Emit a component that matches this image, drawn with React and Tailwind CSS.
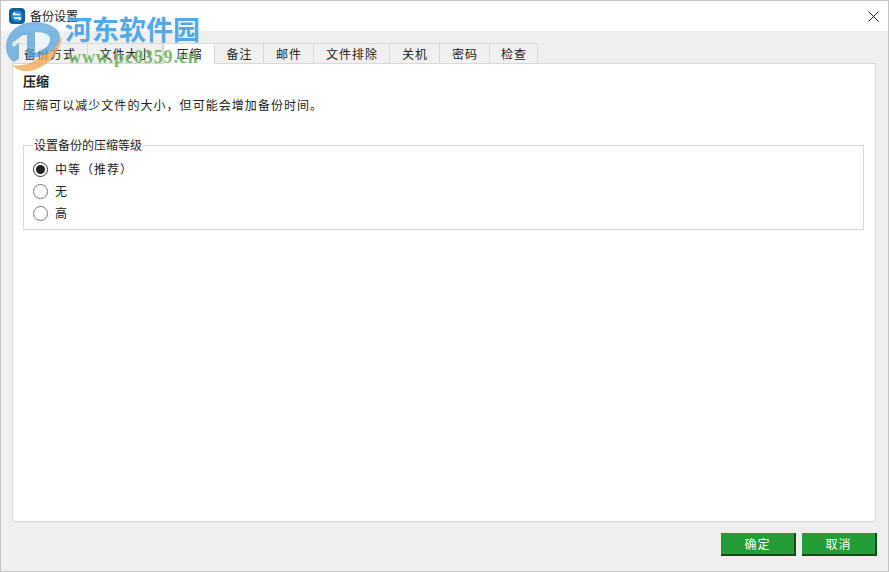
import React from "react";

const font = { fontFamily: '"Noto Sans CJK SC","Liberation Sans",sans-serif' };

function Radio({ checked, label }) {
  return (
    <div className="flex items-center h-[22px]">
      <span className={`w-[15px] h-[15px] rounded-full border flex items-center justify-center bg-white ${checked ? "border-[#333333]" : "border-[#777777]"}`}>
        {checked && <span className="w-[9px] h-[9px] rounded-full bg-[#222222]" />}
      </span>
      <span className="ml-[7px] text-[12px] tracking-[1px] text-[#222222] leading-none">{label}</span>
    </div>
  );
}

const tabs = [
  ["备份方式", 76, false],
  ["文件大小", 75, false],
  ["压缩", 52, true],
  ["备注", 49, false],
  ["邮件", 50, false],
  ["文件排除", 76, false],
  ["关机", 50, false],
  ["密码", 50, false],
  ["检查", 48, false],
];

export default function App() {
  return (
    <div className="relative w-[889px] h-[572px] overflow-hidden bg-[#efefef] border border-[#c4c4c4] flex flex-col" style={font}>
      <div className="h-[30px] bg-white flex items-center pl-[8px] pr-[9px] shrink-0">
        <svg width="16" height="16" viewBox="0 0 16 16" className="shrink-0">
          <rect x="0" y="0" width="16" height="16" rx="4" fill="#0f5f9e" />
          <circle cx="8" cy="8" r="5.5" fill="#2b8fd8" />
          <path d="M4 6.5 L11 6.5 M4 6.5 L6 4.5 M12 10 L5 10 M12 10 L10 12" stroke="#ffffff" strokeWidth="1.6" fill="none" />
        </svg>
        <span className="ml-[5px] text-[12px] text-[#222222] leading-none">备份设置</span>
        <svg width="11" height="11" viewBox="0 0 11 11" className="ml-auto">
          <path d="M0.5 0.5 L10.5 10.5 M10.5 0.5 L0.5 10.5" stroke="#111111" strokeWidth="1" />
        </svg>
      </div>

      <div className="flex-1 flex flex-col pl-[11px] pt-[12px] min-h-0">
        <div className="flex items-end h-[20px] shrink-0 relative z-10">
          {tabs.map(([t, w, active]) => (
            <div
              key={t}
              style={{ width: w }}
              className={`flex items-center justify-center pl-[1px] text-[12px] text-[#222222] tracking-[1.05px] leading-none border-[#d9d9d9] border-r ${active ? "h-[21px] bg-white border-l border-t -mb-px" : "h-[20px] border-t bg-[#f0f0f0]"}`}
            >
              {t}
            </div>
          ))}
        </div>
        <div className="h-[459px] w-[864px] bg-white border border-[#d9d9d9] px-[10px] shrink-0">
          <div className="text-[13px] font-bold text-[#222222] mt-[9px] leading-[16px]">压缩</div>
          <div className="text-[12px] text-[#222222] mt-[8px] leading-[16px] tracking-[1.05px]">压缩可以减少文件的大小，但可能会增加备份时间。</div>
          <fieldset className="mt-[25px] border border-[#d9d9d9] h-[92px] w-[841px] pl-[9px]">
            <legend className="text-[12px] text-[#222222] px-[1px] leading-[14px]">设置备份的压缩等级</legend>
            <div className="mt-[6px] flex flex-col">
              <Radio checked label="中等（推荐）" />
              <Radio label="无" />
              <Radio label="高" />
            </div>
          </fieldset>
        </div>
        <div className="flex justify-end gap-[6px] mt-[11px] w-[865px]">
          {["确定", "取消"].map((t) => (
            <button key={t} className="w-[75px] h-[23px] bg-[#249c37] border-r-2 border-b-2 border-[#0e4f1a] text-white text-[12px] tracking-[1px] leading-none">
              {t}
            </button>
          ))}
        </div>
      </div>

      {/* watermark */}
      <svg width="62" height="52" viewBox="0 0 62 52" className="absolute left-[3px] top-[20px] z-20 opacity-75 pointer-events-none">
        <path d="M58 16 C56 32 44 46 26 50 C20 51 12 49 8 44 C18 46 30 42 38 34 C46 27 52 20 58 16 Z" fill="#f2a450" />
        <path d="M30 1 C14 1 2 12 2 26 C2 33 5 38 10 41 L15 38 L15 22 L9 26 L8 22 L19 14 L23 14 L23 38 C38 36 55 30 56 16 C56 7 44 1 30 1 Z" fill="#55a3dd" />
        <path d="M31 11 C41 11 47 14 46 19 C45 26 38 30 31 32 Z" fill="#ffffff" opacity="0.9" />
      </svg>
      <div className="absolute z-20 left-[64px] top-[10px] text-[27px] font-bold text-[#52a8ea] leading-[36px] whitespace-nowrap pointer-events-none">
        河东软件园
      </div>
      <div className="absolute z-20 left-[67px] top-[46px] text-[18px] font-bold text-[#6cb35c] leading-[20px] tracking-[0.9px] whitespace-nowrap pointer-events-none opacity-90" style={{ fontFamily: '"Liberation Serif",serif' }}>
        www.pc0359.cn
      </div>
    </div>
  );
}
